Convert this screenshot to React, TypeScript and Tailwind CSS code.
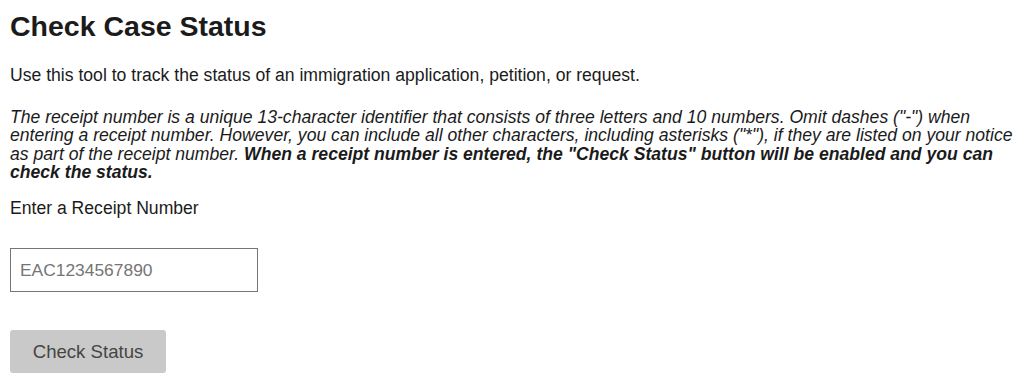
import React from 'react';

const App: React.FC = () => {
  return (
    <div className="min-h-screen w-full bg-white px-[10px] text-[#1b1b1b] font-['Liberation_Sans',Arial,sans-serif]">
      <h1 className="pt-[10px] text-[28.5px] font-bold leading-[32px]">Check Case Status</h1>
      <p className="mt-[22px] text-[17.6px] leading-[22px]">
        Use this tool to track the status of an immigration application, petition, or request.
      </p>
      <p className="mt-[22px] text-[17.6px] leading-[18.3px] italic">
        The receipt number is a unique 13-character identifier that consists of three letters and 10 numbers. Omit
        dashes ("-") when entering a receipt number. However, you can include all other characters, including asterisks
        ("*"), if they are listed on your notice as part of the receipt number.{' '}
        <strong className="font-bold">
          When a receipt number is entered, the "Check Status" button will be enabled and you can check the status.
        </strong>
      </p>
      <label htmlFor="receipt" className="mt-[16px] block text-[17.6px] leading-[22px]">
        Enter a Receipt Number
      </label>
      <input
        id="receipt"
        type="text"
        placeholder="EAC1234567890"
        className="mt-[29px] block h-[44px] w-[248px] border border-[#757575] px-[9px] text-[17.4px] text-[#1b1b1b] placeholder:text-[#757575] outline-none"
      />
      <button
        type="button"
        disabled
        className="mt-[38px] block h-[43px] w-[156px] rounded-[3px] bg-[#c9c9c9] text-[18.6px] text-[#454545]"
      >
        Check Status
      </button>
    </div>
  );
};

export default App;
